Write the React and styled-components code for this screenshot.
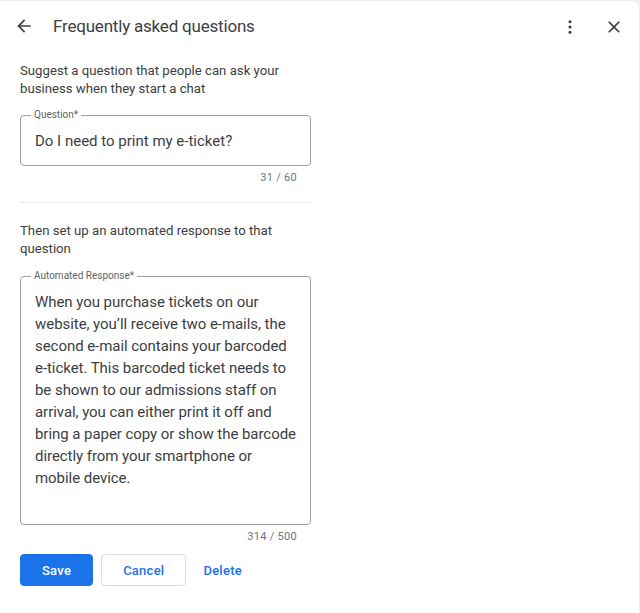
import React from 'react';
import styled, { createGlobalStyle } from 'styled-components';

const GlobalStyle = createGlobalStyle`
  html, body {
    margin: 0;
    padding: 0;
    background: #eceff1;
    font-family: Roboto, "Liberation Sans", Arial, sans-serif;
  }
`;

const Panel = styled.div`
  margin-top: 1px;
  width: 639px;
  min-height: 612px;
  background: #fff;
  border-top-right-radius: 8px;
  box-sizing: border-box;
`;

const Toolbar = styled.header`
  display: flex;
  align-items: center;
  height: 50px;
  padding: 0 13px 0 12px;
`;

const IconButton = styled.button`
  display: flex;
  align-items: center;
  justify-content: center;
  width: 24px;
  height: 24px;
  padding: 0;
  border: 0;
  background: none;
  color: #3c4043;
  cursor: pointer;
`;

const Title = styled.h1`
  flex: 1;
  margin: 0 0 0 17px;
  font-size: 17px;
  font-weight: 400;
  color: #3c4043;
  letter-spacing: -0.2px;
`;

const Actions = styled.div`
  display: flex;
  align-items: center;
  gap: 20px;
  padding-top: 2px;
`;

const Form = styled.div`
  width: 291px;
  padding: 11px 0 0 20px;
`;

const Hint = styled.p`
  margin: 0;
  font-size: 13.2px;
  line-height: 18px;
  color: #3c4043;
`;

const Field = styled.fieldset`
  margin: ${({ top }) => top}px 0 0;
  padding: 0 14px;
  min-width: 0;
  border: 1px solid #9aa0a6;
  border-radius: 4px;
  height: ${({ h }) => h}px;
  box-sizing: border-box;
`;

const Legend = styled.legend`
  margin-left: -4px;
  padding: 0 3px;
  font-size: 10px;
  line-height: 12px;
  color: #5f6368;
`;

const Value = styled.div`
  font-size: 15px;
  line-height: ${({ lh }) => lh}px;
  color: #3c4043;
  padding-top: ${({ pt }) => pt}px;
`;

const Line = styled.span`
  display: block;
  white-space: nowrap;
  letter-spacing: -0.05px;
`;

const Counter = styled.div`
  text-align: right;
  padding-right: 14px;
  margin-top: 5px;
  font-size: 11px;
  line-height: 14px;
  color: #70757a;
  letter-spacing: 0.3px;
`;

const Divider = styled.hr`
  margin: 17px 0 19px;
  border: 0;
  border-top: 1px solid #e8eaed;
`;

const ButtonRow = styled.div`
  display: flex;
  gap: 8px;
  margin-top: 10px;
`;

const Button = styled.button`
  height: 32px;
  padding: 0 ${({ pad }) => pad}px;
  border-radius: 4px;
  font-family: Roboto, "Liberation Sans", Arial, sans-serif;
  font-size: 13px;
  font-weight: 500;
  letter-spacing: 0.25px;
  cursor: pointer;
  background: ${({ variant }) => (variant === 'primary' ? '#1a73e8' : '#fff')};
  color: ${({ variant }) => (variant === 'primary' ? '#fff' : '#1a73e8')};
  border: 1px solid
    ${({ variant }) =>
      variant === 'primary' ? '#1a73e8' : variant === 'outline' ? '#dadce0' : 'transparent'};
`;

const ArrowIcon = () => (
  <svg width="20" height="20" viewBox="0 0 24 24" fill="currentColor">
    <path d="M20 11H7.83l5.59-5.59L12 4l-8 8 8 8 1.41-1.41L7.83 13H20v-2z" />
  </svg>
);

const MoreIcon = () => (
  <svg width="24" height="24" viewBox="0 0 24 24" fill="currentColor">
    <circle cx="12" cy="6.8" r="1.5" />
    <circle cx="12" cy="12" r="1.5" />
    <circle cx="12" cy="17.2" r="1.5" />
  </svg>
);

const CloseIcon = () => (
  <svg width="20" height="20" viewBox="0 0 24 24" fill="currentColor">
    <path d="M19 6.41L17.59 5 12 10.59 6.41 5 5 6.41 10.59 12 5 17.59 6.41 19 12 13.41 17.59 19 19 17.59 13.41 12z" />
  </svg>
);

const answerLines = [
  'When you purchase tickets on our',
  'website, you\u2019ll receive two e-mails, the',
  'second e-mail contains your barcoded',
  'e-ticket. This barcoded ticket needs to',
  'be shown to our admissions staff on',
  'arrival, you can either print it off and',
  'bring a paper copy or show the barcode',
  'directly from your smartphone or',
  'mobile device.',
];

export default function App() {
  return (
    <>
      <GlobalStyle />
      <Panel>
        <Toolbar>
          <IconButton aria-label="Back">
            <ArrowIcon />
          </IconButton>
          <Title>Frequently asked questions</Title>
          <Actions>
            <IconButton aria-label="More">
              <MoreIcon />
            </IconButton>
            <IconButton aria-label="Close">
              <CloseIcon />
            </IconButton>
          </Actions>
        </Toolbar>
        <Form>
          <Hint>
            Suggest a question that people can ask your business when they start a chat
          </Hint>
          <Field top={11} h={57}>
            <Legend>Question*</Legend>
            <Value lh={20} pt={10}>Do I need to print my e-ticket?</Value>
          </Field>
          <Counter>31 / 60</Counter>
          <Divider />
          <Hint>Then set up an automated response to that question</Hint>
          <Field top={12} h={255}>
            <Legend>Automated Response*</Legend>
            <Value lh={22} pt={9}>
              {answerLines.map((line) => (
                <Line key={line}>{line}</Line>
              ))}
            </Value>
          </Field>
          <Counter>314 / 500</Counter>
          <ButtonRow>
            <Button variant="primary" pad={21}>Save</Button>
            <Button variant="outline" pad={21}>Cancel</Button>
            <Button variant="text" pad={8}>Delete</Button>
          </ButtonRow>
        </Form>
      </Panel>
    </>
  );
}
